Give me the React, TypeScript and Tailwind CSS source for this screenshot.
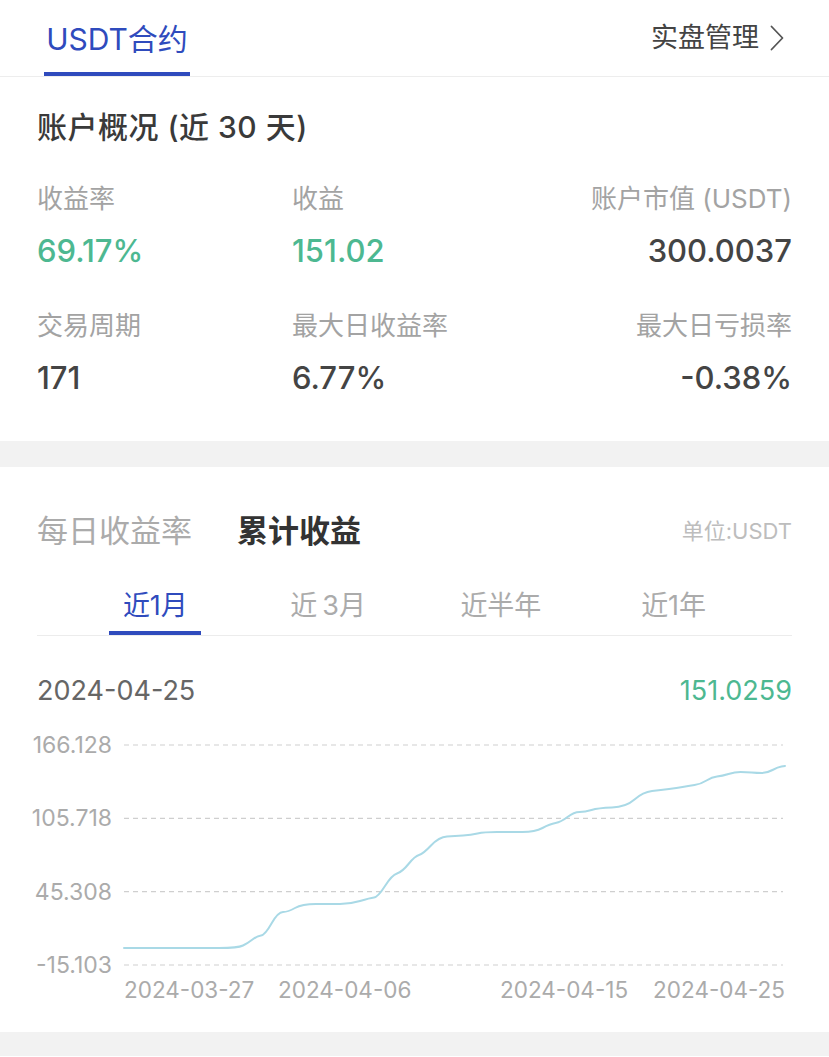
import React from "react";

const pts: [number, number][] = [
  [124, 949], [200, 949], [238, 949], [248, 944], [257, 937], [265, 936], [278, 913], [288, 913], [302, 905], [330, 905], [350, 905],
  [370, 899], [378, 898], [392, 876], [402, 873], [415, 857], [423, 855], [439, 838], [455, 837],
  [471, 836], [484, 833], [510, 833], [535, 833], [550, 825], [561, 823], [574, 813], [585, 813], [598, 809],
  [626, 808], [643, 793], [661, 791], [677, 789], [688, 787], [701, 785], [712, 778], [722, 777],
  [735, 773], [746, 773], [757, 774], [767, 774], [778, 768], [785, 767],
];

function smoothPath(p: [number, number][], dy: number): string {
  let d = `M${p[0][0]} ${p[0][1] - dy}`;
  for (let i = 1; i < p.length - 1; i++) {
    const mx = (p[i][0] + p[i + 1][0]) / 2;
    const my = (p[i][1] + p[i + 1][1]) / 2;
    d += ` Q${p[i][0]} ${p[i][1] - dy} ${mx} ${my - dy}`;
  }
  const l = p[p.length - 1];
  d += ` L${l[0]} ${l[1] - dy}`;
  return d;
}

function Stat({ label, value, color, align }: { label: string; value: string; color: string; align?: "right" }) {
  return (
    <div className={align === "right" ? "flex flex-col items-end" : "flex flex-col items-start"}>
      <div className="text-[26px] leading-[34px] text-[#a3a3a3]">{label}</div>
      <div className={`mt-[15px] text-[31px] leading-[40px] font-medium ${color}`}>{value}</div>
    </div>
  );
}

export default function App() {
  const gridY = [37, 110.33, 183.67, 257];
  const yLabels = ["166.128", "105.718", "45.308", "-15.103"];
  return (
    <div className="w-[829px] bg-white font-['Inter','Noto_Sans_CJK_SC',sans-serif]">
      {/* header */}
      <div className="flex h-[77px] items-stretch justify-between border-b border-[#ededed]">
        <div className="ml-[44px] flex w-[146px] flex-col items-center">
          <div className="mt-[19px] text-[30px] leading-[40px] text-[#2f4bbd]">USDT合约</div>
          <div className="mt-auto h-[4px] w-full bg-[#2f4bbd]" />
        </div>
        <div className="mr-[45px] flex items-center gap-[11px]">
          <span className="text-[27px] leading-[34px] text-[#444]">实盘管理</span>
          <svg width="14" height="26" viewBox="0 0 14 26" fill="none">
            <path d="M1.5 1.5 L12.5 13 L1.5 24.5" stroke="#555" strokeWidth="1.8" strokeLinecap="round" strokeLinejoin="round" />
          </svg>
        </div>
      </div>

      {/* account overview */}
      <div className="px-[37px] pt-[30px] pb-[43px]">
        <div className="text-[30px] leading-[40px] font-medium tracking-[0.5px] text-[#3a3a3a]">账户概况 (近 30 天)</div>
        <div className="mt-[35px] grid grid-cols-[255px_1fr_auto] gap-y-[38px]">
          <Stat label="收益率" value="69.17%" color="text-[#4db891]" />
          <Stat label="收益" value="151.02" color="text-[#4db891]" />
          <Stat label="账户市值 (USDT)" value="300.0037" color="text-[#444]" align="right" />
          <Stat label="交易周期" value="171" color="text-[#444]" />
          <Stat label="最大日收益率" value="6.77%" color="text-[#444]" />
          <Stat label="最大日亏损率" value="-0.38%" color="text-[#444]" align="right" />
        </div>
      </div>

      <div className="h-[26px] bg-[#f2f2f2]" />

      {/* chart section */}
      <div className="px-[37px] pt-[44px]">
        <div className="flex items-center justify-between">
          <div className="flex items-center gap-[45px]">
            <span className="text-[31px] leading-[40px] text-[#ababab]">每日收益率</span>
            <span className="text-[31px] leading-[40px] font-semibold text-[#333]">累计收益</span>
          </div>
          <span className="text-[22px] leading-[30px] text-[#bdbdbd]">单位:USDT</span>
        </div>

        <div className="mt-[38px] border-b border-[#ececec]">
          <div className="grid grid-cols-4 px-[32px]">
            {["近1月", "近\u20093月", "近半年", "近1年"].map((t, i) => (
              <div key={t} className="flex flex-col items-center">
                <span className={`text-[27px] leading-[34px] ${i === 0 ? "text-[#2f4bbd]" : "text-[#ababab]"}`}>{t}</span>
                <div className={`mt-[8px] h-[4px] w-[92px] ${i === 0 ? "bg-[#2f4bbd]" : "bg-transparent"}`} />
              </div>
            ))}
          </div>
        </div>

        <div className="mt-[38px] flex items-center justify-between">
          <span className="text-[27px] leading-[34px] text-[#666]">2024-04-25</span>
          <span className="text-[27px] leading-[34px] text-[#4db891]">151.0259</span>
        </div>
      </div>

      <svg width="829" height="324" viewBox="0 0 829 324" className="block">
        {gridY.map((y, i) => (
          <g key={i}>
            <line x1="124" y1={y} x2="783" y2={y} stroke="#cfcfcf" strokeWidth="1.2" strokeDasharray="5 4" />
            <text x="112" y={y} textAnchor="end" dominantBaseline="central" fontSize="23" fill="#ababab" fontFamily="Inter, sans-serif">
              {yLabels[i]}
            </text>
          </g>
        ))}
        <path d={smoothPath(pts, 709)} fill="none" stroke="#a9d9e6" strokeWidth="2" strokeLinejoin="round" strokeLinecap="round" />
        {[
          { x: 124, a: "start", t: "2024-03-27" },
          { x: 278, a: "start", t: "2024-04-06" },
          { x: 500, a: "start", t: "2024-04-15" },
          { x: 785, a: "end", t: "2024-04-25" },
        ].map((l) => (
          <text key={l.t} x={l.x} y="281" textAnchor={l.a as "start" | "end"} dominantBaseline="central" fontSize="22.5" fill="#ababab" fontFamily="Inter, sans-serif">
            {l.t}
          </text>
        ))}
      </svg>

      <div className="h-[24px] bg-[#f2f2f2]" />
    </div>
  );
}
